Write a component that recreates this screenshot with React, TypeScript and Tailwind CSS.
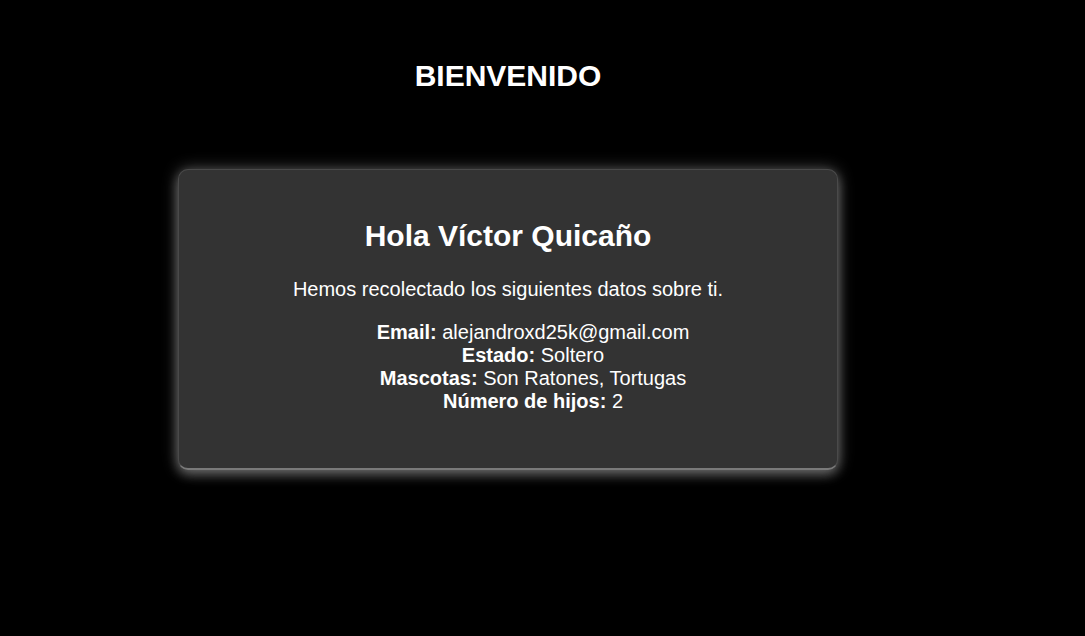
import React from "react";

interface Dato {
  label: string;
  value: string;
}

const datos: Dato[] = [
  { label: "Email:", value: "alejandroxd25k@gmail.com" },
  { label: "Estado:", value: "Soltero" },
  { label: "Mascotas:", value: "Son Ratones, Tortugas" },
  { label: "Número de hijos:", value: "2" },
];

const App = () => {
  return (
    <div className="min-h-screen bg-black text-white font-['Liberation_Sans',Arial,sans-serif] text-[20px] leading-[normal]">
      <div className="w-[1016px] flex flex-col items-center pt-[59px]">
        <h1 className="text-[30px] font-bold leading-[normal]">BIENVENIDO</h1>
        <div className="mt-[76px] w-[660px] h-[301px] bg-[#333333] rounded-[10px] border border-[#4a4a4a] border-b-[#7a7a7a] border-b-2 shadow-[0_0_16px_rgba(255,255,255,0.3),0_5px_12px_rgba(255,255,255,0.28)] flex flex-col items-center text-center pt-[49px]">
          <h2 className="text-[30px] font-bold leading-[normal]">Hola Víctor Quicaño</h2>
          <p className="mt-[25px]">Hemos recolectado los siguientes datos sobre ti.</p>
          <ul className="mt-[20px] pl-[50px]">
            {datos.map((d) => (
              <li key={d.label}>
                <strong>{d.label}</strong> {d.value}
              </li>
            ))}
          </ul>
        </div>
      </div>
    </div>
  );
};

export default App;
